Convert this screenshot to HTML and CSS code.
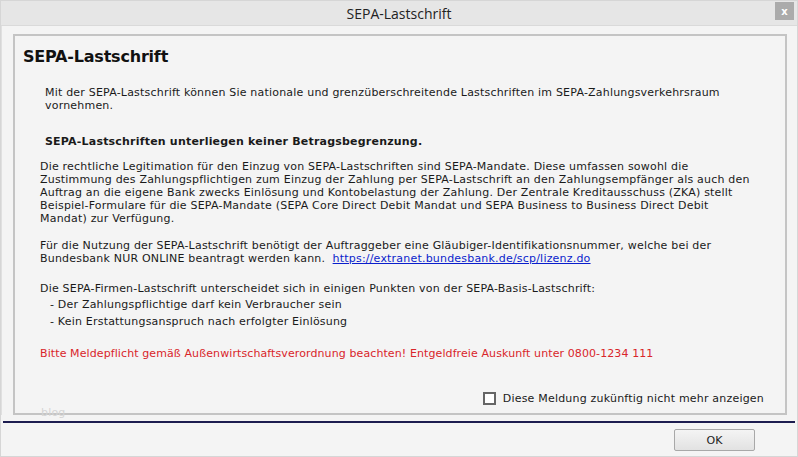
FILE: index.html
```html
<!DOCTYPE html>
<html lang="de">
<head>
  <meta charset="UTF-8">
  <title>SEPA-Lastschrift</title>
<link rel="stylesheet" href="styles.css">
</head>
<body>
<div class="dialog">
  <header class="titlebar">
    <span class="title">SEPA-Lastschrift</span>
    <button class="close">x</button>
  </header>
  <div class="dialog-body">
    <div class="panel">
      <h1>SEPA-Lastschrift</h1>
      <p class="intro">Mit der SEPA-Lastschrift können Sie nationale und grenzüberschreitende Lastschriften im SEPA-Zahlungsverkehrsraum<br>vornehmen.</p>
      <p class="notice">SEPA-Lastschriften unterliegen keiner Betragsbegrenzung.</p>
      <p class="text">Die rechtliche Legitimation für den Einzug von SEPA-Lastschriften sind SEPA-Mandate. Diese umfassen sowohl die<br>Zustimmung des Zahlungspflichtigen zum Einzug der Zahlung per SEPA-Lastschrift an den Zahlungsempfänger als auch den<br>Auftrag an die eigene Bank zwecks Einlösung und Kontobelastung der Zahlung. Der Zentrale Kreditausschuss (ZKA) stellt<br>Beispiel-Formulare für die SEPA-Mandate (SEPA Core Direct Debit Mandat und SEPA Business to Business Direct Debit<br>Mandat) zur Verfügung.</p>
      <p class="text">Für die Nutzung der SEPA-Lastschrift benötigt der Auftraggeber eine Gläubiger-Identifikationsnummer, welche bei der<br>Bundesbank NUR ONLINE beantragt werden kann. &nbsp;<a href="https://extranet.bundesbank.de/scp/lizenz.do">https://extranet.bundesbank.de/scp/lizenz.do</a></p>
      <p class="text firmen">Die SEPA-Firmen-Lastschrift unterscheidet sich in einigen Punkten von der SEPA-Basis-Lastschrift:</p>
      <ul class="points">
        <li>- Der Zahlungspflichtige darf kein Verbraucher sein</li>
        <li>- Kein Erstattungsanspruch nach erfolgter Einlösung</li>
      </ul>
      <p class="warning">Bitte Meldepflicht gemäß Außenwirtschaftsverordnung beachten! Entgeldfreie Auskunft unter 0800-1234 111</p>
      <label class="dont-show"><span class="box"></span>Diese Meldung zukünftig nicht mehr anzeigen</label>
      <span class="watermark">blog</span>
    </div>
  </div>
  <footer class="buttons">
    <button class="ok">OK</button>
  </footer>
</div>
</body>
</html>
```

FILE: styles.css
```css
body {
  margin: 0;
  padding: 0;
  background: #f4f4f4;
}
.dialog {
  width: 798px;
  height: 457px;
  box-sizing: border-box;
  border: 1px solid #d6d6d6;
  background: #f4f4f4;
  display: flex;
  flex-direction: column;
  font-family: "DejaVu Sans", Verdana, sans-serif;
  font-size: 11px;
  letter-spacing: 0.2px;
  color: #1a1a1a;
}
.titlebar {
  height: 24px;
  background: #e6e6e6;
  border-bottom: 1px solid #dadada;
  display: flex;
  align-items: center;
  justify-content: center;
  position: relative;
  letter-spacing: 0;
}
.title {
  font-family: "Open Sans", "Noto Sans", sans-serif;
  font-size: 14px;
  color: #222;
}
.close {
  position: absolute;
  right: 3px;
  top: 1px;
  width: 19px;
  height: 18px;
  border: none;
  background: #ababab;
  color: #fff;
  font-family: "DejaVu Sans", sans-serif;
  font-size: 10px;
  font-weight: bold;
  padding: 0;
}
.dialog-body {
  padding: 8px 10px 0 11px;
  border-left: 1px solid #e0e0e0;
}
.panel {
  height: 381px;
  box-sizing: border-box;
  border: 2px solid #c4c4c4;
  padding: 11px 10px 0 8px;
  position: relative;
}
h1 {
  margin: 0;
  font-family: "DejaVu Sans", Tahoma, sans-serif;
  font-size: 16px;
  font-weight: bold;
  color: #111;
  letter-spacing: -0.2px;
}
p {
  margin: 0;
  line-height: 13px;
}
.intro {
  margin: 20px 0 0 22px;
}
.notice {
  margin: 23px 0 0 22px;
  font-weight: bold;
}
.text {
  margin: 12px 0 0 17px;
}
.text + .text {
  margin-top: 14px;
}
.text.firmen {
  margin-top: 17px;
}
.points {
  list-style: none;
  margin: 1px 0 0 27px;
  padding: 0;
}
.points li {
  line-height: 17px;
}
.warning {
  margin: 17px 0 0 17px;
  color: #d9252a;
  letter-spacing: 0.1px;
}
a {
  color: #0a1ecc;
}
.dont-show {
  display: flex;
  align-items: center;
  justify-content: flex-end;
  margin: 32px 11px 0 0;
}
.box {
  width: 9px;
  height: 9px;
  border: 2px solid #666;
  background: #fff;
  margin-right: 7px;
}
.watermark {
  position: absolute;
  left: 26px;
  bottom: -6px;
  color: #d4d4d4;
  font-size: 11px;
}
.buttons {
  margin-top: 6px;
  border-top: 2px solid #1d1d50;
  margin-left: 2px;
  margin-right: 2px;
  display: flex;
  justify-content: flex-end;
  padding: 6px 40px 0 0;
}
.ok {
  width: 81px;
  height: 22px;
  border: 1px solid #a8a8a8;
  border-radius: 2px;
  background: linear-gradient(#f4f4f4, #e2e2e2);
  font-family: "DejaVu Sans", sans-serif;
  font-size: 11px;
  color: #222;
}
```
